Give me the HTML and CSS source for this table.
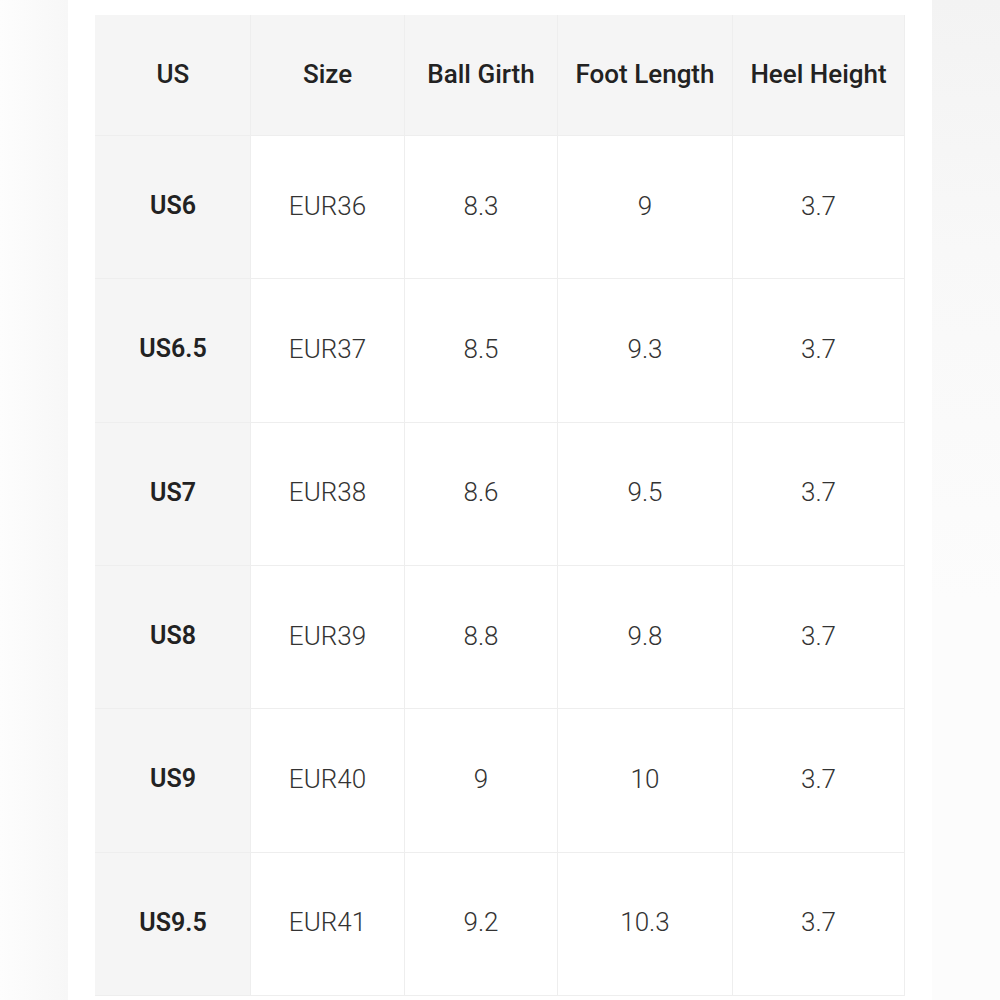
FILE: index.html
```html
<!DOCTYPE html>
<html>
<head>
<meta charset="utf-8">
<link rel="stylesheet" href="styles.css">
</head>
<body>
<div class="page">
  <div class="gutter gutter-left"></div>
  <main class="content">
    <table class="size-table">
      <colgroup>
        <col class="c1"><col class="c2"><col class="c3"><col class="c4"><col class="c5">
      </colgroup>
      <thead>
        <tr>
          <th>US</th><th>Size</th><th>Ball Girth</th><th>Foot Length</th><th>Heel Height</th>
        </tr>
      </thead>
      <tbody>
        <tr><th>US6</th><td>EUR36</td><td>8.3</td><td>9</td><td>3.7</td></tr>
        <tr><th>US6.5</th><td>EUR37</td><td>8.5</td><td>9.3</td><td>3.7</td></tr>
        <tr><th>US7</th><td>EUR38</td><td>8.6</td><td>9.5</td><td>3.7</td></tr>
        <tr><th>US8</th><td>EUR39</td><td>8.8</td><td>9.8</td><td>3.7</td></tr>
        <tr><th>US9</th><td>EUR40</td><td>9</td><td>10</td><td>3.7</td></tr>
        <tr><th>US9.5</th><td>EUR41</td><td>9.2</td><td>10.3</td><td>3.7</td></tr>
      </tbody>
    </table>
  </main>
  <div class="gutter gutter-right"></div>
</div>
</body>
</html>
```
FILE: styles.css
```css
html, body {
  margin: 0;
  padding: 0;
  background: #ffffff;
}
body {
  font-family: Roboto, "Liberation Sans", sans-serif;
  color: #333333;
}
.page {
  display: flex;
  width: 1000px;
  height: 1000px;
  overflow: hidden;
}
.gutter {
  flex: none;
  height: 1000px;
}
.gutter-left {
  width: 68px;
  background: linear-gradient(to right, #fdfdfd 0%, #f7f7f7 100%);
}
.gutter-right {
  width: 68px;
  background: linear-gradient(to bottom, #f3f3f3 0%, #f8f8f8 25%, #fcfcfc 60%, #fcfcfc 100%);
}
.content {
  flex: none;
  width: 864px;
  padding: 15px 0 0 27px;
  box-sizing: border-box;
  background: #ffffff;
}
.size-table {
  table-layout: fixed;
  border-collapse: collapse;
  width: 809px;
}
.c1 { width: 155px; }
.c2 { width: 154px; }
.c3 { width: 153px; }
.c4 { width: 175px; }
.c5 { width: 172px; }
.size-table th,
.size-table td {
  border: 1px solid #eeeeee;
  text-align: center;
  vertical-align: middle;
  padding: 0 0 3px 0;
  font-size: 26px;
  white-space: nowrap;
}
.size-table thead tr {
  height: 120px;
}
.size-table thead th {
  background: #f5f5f5;
  font-weight: 500;
  color: #222222;
}
.size-table tbody tr {
  height: 143.33px;
}
.size-table tbody th {
  background: #f5f5f5;
  font-weight: 600;
  font-size: 25px;
  color: #222222;
}
.size-table tbody td {
  font-weight: 300;
  color: #333333;
  background: #ffffff;
}
.size-table thead th:first-child,
.size-table tbody th {
  border-left-color: #f5f5f5;
}
.size-table thead th {
  border-top-color: #f5f5f5;
}
```
